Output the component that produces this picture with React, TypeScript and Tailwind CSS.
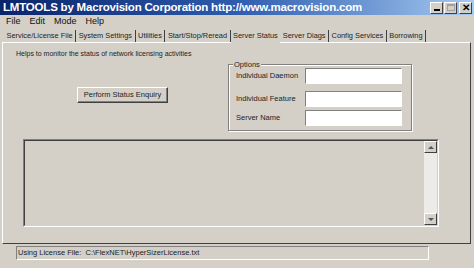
const font = { fontFamily: '"Liberation Sans", Arial, sans-serif' };

function CaptionButton({ children, disabled }: { children: React.ReactNode; disabled?: boolean }) {
  return (
    <div
      className={
        'flex h-[12px] w-[13px] items-center justify-center border border-t-white border-l-white border-r-[#404040] border-b-[#404040] bg-[#d4d0c8] text-[10px] font-bold leading-none ' +
        (disabled ? 'text-[#a0a0a0]' : 'text-black')
      }
    >
      {children}
    </div>
  );
}

const tabs = [
  'Service/License File',
  'System Settings',
  'Utilities',
  'Start/Stop/Reread',
  'Server Status',
  'Server Diags',
  'Config Services',
  'Borrowing',
];

function Field({ label }: { label: string }) {
  return (
    <div className="flex items-center">
      <span className="w-[69px] text-[7.5px] text-[#222]">{label}</span>
      <div className="h-[16px] w-[97px] border border-t-[#808080] border-l-[#808080] border-r-white border-b-white bg-white" />
    </div>
  );
}

export default function App() {
  return (
    <div className="flex h-[268px] w-[474px] flex-col overflow-hidden bg-[#d4d0c8]" style={font}>
      {/* title bar */}
      <div className="flex h-[15px] items-center bg-gradient-to-r from-[#0a246a] via-[#2f5cae] to-[#a6caf0] pl-[3px] pr-[2px]">
        <span className="flex-1 text-[11.5px] font-bold leading-none tracking-[-0.2px] text-white">
          LMTOOLS by Macrovision Corporation http://www.macrovision.com
        </span>
        <div className="flex gap-[1px]">
          <CaptionButton>
            <span className="mt-[5px] block h-[2px] w-[6px] bg-black" />
          </CaptionButton>
          <CaptionButton disabled>
            <span className="block h-[7px] w-[8px] border border-t-2 border-[#a0a0a0]" />
          </CaptionButton>
          <div className="ml-[1px]">
            <CaptionButton>✕</CaptionButton>
          </div>
        </div>
      </div>

      {/* menu bar */}
      <div className="flex h-[14px] items-center gap-[9px] pl-[6px] text-[9px] text-[#111]">
        <span>File</span>
        <span>Edit</span>
        <span>Mode</span>
        <span>Help</span>
      </div>

      {/* tabs */}
      <div className="flex h-[13px] items-end pl-[4px] pt-[1px]">
        {tabs.map((t) => {
          const active = t === 'Server Status';
          return (
            <div
              key={t}
              className={
                'flex items-center whitespace-nowrap px-[2.5px] text-[7.4px] text-[#222] ' +
                (active
                  ? 'relative z-10 -mb-[1px] h-[14px] bg-[#d4d0c8]'
                  : 'h-[12px] border-r border-r-[#404040]')
              }
            >
              {t}
            </div>
          );
        })}
      </div>

      {/* tab panel */}
      <div className="ml-[2px] flex h-[202px] w-[469px] flex-col border border-t-white border-l-white border-r-[#404040] border-b-[#404040]">
        <div className="flex">
          <div className="w-[225px] pl-[13px] pt-[6px]">
            <p className="text-[7px] text-[#222]">Helps to monitor the status of network licensing activities</p>
            <button className="ml-[61px] mt-[27px] flex h-[16px] w-[91px] items-center justify-center border border-t-white border-l-white border-r-[#404040] border-b-[#404040] text-[7.5px] text-[#222] shadow-[inset_-1px_-1px_0_#808080]">
              Perform Status Enquiry
            </button>
          </div>
          <div className="relative mt-[21px] flex h-[67px] w-[184px] flex-col gap-[7px] border border-[#808080] pl-[7px] pt-[3px] shadow-[inset_1px_1px_0_white,1px_1px_0_white]">
            <span className="absolute -top-[5px] left-[4px] bg-[#d4d0c8] px-[1px] text-[7.5px] leading-[9px] text-[#222]">
              Options
            </span>
            <Field label="Individual Daemon" />
            <Field label="Individual Feature" />
            <div className="-mt-[4px]">
              <Field label="Server Name" />
            </div>
          </div>
        </div>

        {/* output list */}
        <div className="ml-[20px] mt-[8px] flex h-[88px] w-[416px] border border-t-[#808080] border-l-[#808080] border-r-white border-b-white">
          <div className="flex flex-1 border border-t-[#404040] border-l-[#404040] border-r-[#d4d0c8] border-b-[#d4d0c8]">
            <div className="flex-1" />
            <div className="flex w-[13px] flex-col bg-[#ecebe8]">
              <div className="flex h-[12px] items-center justify-center border border-t-white border-l-white border-r-[#404040] border-b-[#404040] bg-[#d4d0c8]">
                <span className="block h-0 w-0 border-x-[3px] border-b-[3px] border-x-transparent border-b-[#555]" />
              </div>
              <div className="flex-1" />
              <div className="flex h-[12px] items-center justify-center border border-t-white border-l-white border-r-[#404040] border-b-[#404040] bg-[#d4d0c8]">
                <span className="block h-0 w-0 border-x-[3px] border-t-[3px] border-x-transparent border-t-[#555]" />
              </div>
            </div>
          </div>
        </div>
      </div>

      {/* status bar */}
      <div className="ml-[16px] mt-[2px] flex h-[14px] w-[413px] items-center border border-t-[#808080] border-l-[#808080] border-r-white border-b-white pl-[1px] text-[7.5px] text-[#222]">
        Using License File:&nbsp; C:\FlexNET\HyperSizerLicense.txt
      </div>
    </div>
  );
}
